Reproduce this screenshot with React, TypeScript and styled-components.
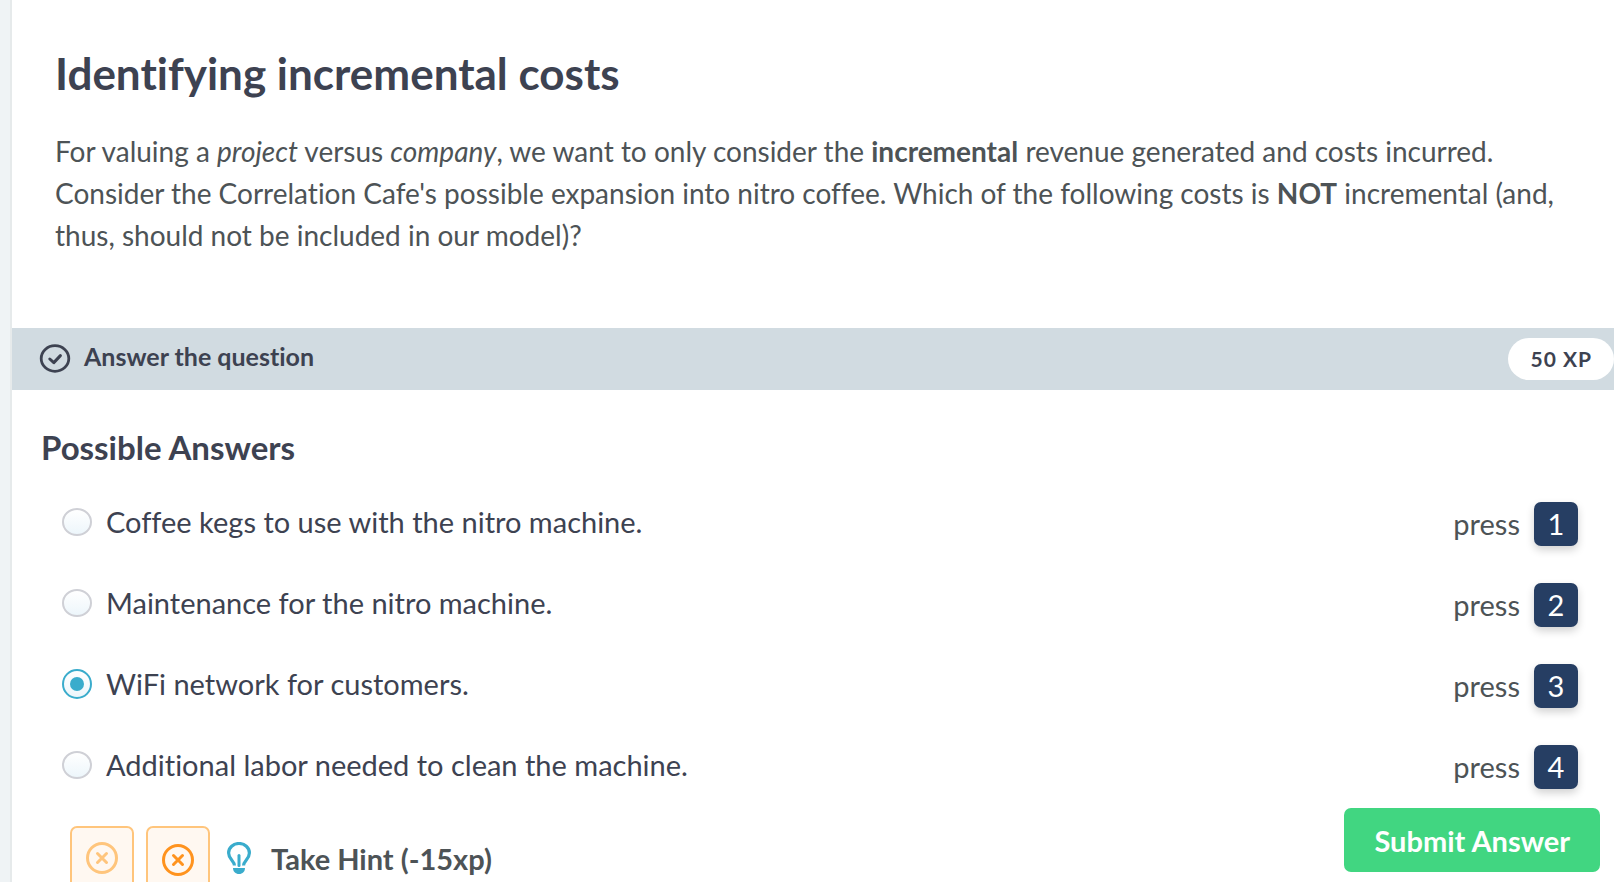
import React, { useState } from 'react';
import styled, { createGlobalStyle, css } from 'styled-components';

const Global = createGlobalStyle`
  * { box-sizing: border-box; }
  html, body, #root { height: 100%; }
  body {
    margin: 0;
    overflow: hidden;
    background: #eff3f5;
    color: #3d4251;
    font-family: Lato, sans-serif;
    font-variant-ligatures: none;
  }
  button { font-family: inherit; cursor: pointer; }
`;

const Panel = styled.main`
  margin-left: 10px;
  min-height: 100%;
  border-left: 2px solid #e6eaeb;
  background: #fff;
`;

const Intro = styled.section`
  padding: 46px 20px 72px 43px;
`;

const Title = styled.h1`
  margin: 0 0 30px;
  font-size: 44px;
  line-height: 54px;
  font-weight: 700;
`;

const Question = styled.p`
  margin: 0;
  font-size: 28px;
  line-height: 42px;
  color: #4d5356;
`;

const Bar = styled.header`
  display: flex;
  align-items: center;
  height: 62px;
  padding-left: 27px;
  background: #d1dbe1;
`;

const BarTitle = styled.h2`
  flex: 1;
  margin: 0 0 6px 13px;
  font-size: 25px;
  line-height: 30px;
`;

const Points = styled.span`
  padding: 0 22px;
  border-radius: 21px;
  background: #fff;
  font-size: 21px;
  line-height: 42px;
  font-weight: 700;
  letter-spacing: 1px;
`;

const Answers = styled.form`
  padding: 37px 36px 3px 29px;
`;

const Legend = styled.h2`
  margin: 0 0 14px;
  font-size: 33px;
  line-height: 40px;
`;

const Row = styled.div`
  display: flex;
  align-items: center;
  height: 81px;
`;

const Choice = styled.label`
  display: flex;
  align-items: center;
  flex: 1;
  gap: 14px;
  padding-left: 21px;
  font-size: 29px;
  line-height: 42px;
`;

const Radio = styled.input`
  appearance: none;
  display: grid;
  place-items: center;
  width: 30px;
  height: 28px;
  margin: 0;
  border: 2px solid #cfd0d6;
  border-radius: 50%;
  background: linear-gradient(#fff, #edf6fb);

  &:checked {
    height: 30px;
    border-color: #3aaccc;
  }

  &:checked::before {
    content: '';
    width: 14px;
    height: 14px;
    border-radius: 50%;
    background: #3aaccc;
  }
`;

const Shortcut = styled.span`
  display: flex;
  align-items: center;
  gap: 14px;
  padding-top: 4px;
  color: #4d5356;
  font-size: 29px;
  line-height: 44px;
`;

const Key = styled.kbd`
  width: 44px;
  border-radius: 7px;
  background: #263e63;
  box-shadow: 0 4px 8px rgba(0, 0, 0, 0.18);
  color: #fff;
  font-family: inherit;
  text-align: center;
`;

const Actions = styled.footer`
  display: flex;
  align-items: flex-start;
  justify-content: space-between;
  padding: 0 14px 0 58px;
`;

const Hints = styled.div`
  display: flex;
  align-items: flex-start;
  gap: 12px;
  padding-top: 18px;
`;

const Attempt = styled.span<{ $faded?: boolean }>`
  display: flex;
  justify-content: center;
  width: 64px;
  height: 68px;
  padding-top: 16px;
  border: 2px solid #ffc57c;
  border-radius: 7px;
  background: #fff8f1;
  color: #ff931e;
  ${(p) => p.$faded && css`
    padding-top: 14px;
    color: #ffc57c;
  `}
`;

const HintButton = styled.button`
  display: flex;
  align-items: center;
  gap: 20px;
  height: 64px;
  padding: 0 5px;
  border: 0;
  background: none;
  color: #4d5356;
  font-size: 29px;
  font-weight: 700;
`;

const Submit = styled.button`
  height: 64px;
  padding: 0 30px;
  border: 0;
  border-radius: 7px;
  background: #41d681;
  color: #fff;
  font-size: 29px;
  font-weight: 700;
`;

const answers = [
  'Coffee kegs to use with the nitro machine.',
  'Maintenance for the nitro machine.',
  'WiFi network for customers.',
  'Additional labor needed to clean the machine.',
];

const CheckIcon = () => (
  <svg width="32" height="30" viewBox="0 0 32 30" fill="none" stroke="currentColor" strokeWidth="3" aria-hidden="true">
    <ellipse cx="16" cy="14.5" rx="13.8" ry="12.8" strokeWidth="2.8" />
    <path d="M10.8 15l4 3.6 6.6-7" strokeLinecap="round" strokeLinejoin="round" />
  </svg>
);

const CrossIcon = () => (
  <svg width="32" height="32" viewBox="0 0 32 32" fill="none" stroke="currentColor" strokeWidth="3" aria-hidden="true">
    <circle cx="16" cy="16" r="14.5" />
    <path d="M11.5 11.5l9 9M20.5 11.5l-9 9" strokeLinecap="round" />
  </svg>
);

const BulbIcon = () => (
  <svg width="24" height="32" viewBox="0 0 24 32" fill="none" stroke="#3aaccc" aria-hidden="true">
    <path d="M7.4 23.6C7.4 18.6 1.6 17 1.6 11A10.4 9.5 0 0 1 22.4 11C22.4 17 16.6 18.6 16.6 23.6" strokeWidth="3.2" />
    <path d="M12 13.5V23.6" strokeWidth="3" strokeLinecap="round" />
    <path d="M6 26H18C18 29.6 15.6 32 12 32S6 29.6 6 26Z" fill="#3aaccc" stroke="none" />
  </svg>
);

export default function App() {
  const [selected, setSelected] = useState(2);

  return (
    <>
      <Global />
      <Panel>
        <Intro>
          <Title>Identifying incremental costs</Title>
          <Question>
            For valuing a <em>project</em> versus <em>company</em>, we want to only consider the{' '}
            <strong>incremental</strong> revenue generated and costs incurred. Consider the Correlation
            Cafe's possible expansion into nitro coffee. Which of the following costs is{' '}
            <strong>NOT</strong> incremental (and, thus, should not be included in our model)?
          </Question>
        </Intro>
        <Bar>
          <CheckIcon />
          <BarTitle>Answer the question</BarTitle>
          <Points>50 XP</Points>
        </Bar>
        <Answers id="answers" onSubmit={(e) => e.preventDefault()}>
          <Legend>Possible Answers</Legend>
          {answers.map((text, i) => (
            <Row key={text}>
              <Choice>
                <Radio type="radio" name="answer" checked={selected === i} onChange={() => setSelected(i)} />
                {text}
              </Choice>
              <Shortcut>
                press <Key>{i + 1}</Key>
              </Shortcut>
            </Row>
          ))}
        </Answers>
        <Actions>
          <Hints>
            <Attempt $faded><CrossIcon /></Attempt>
            <Attempt><CrossIcon /></Attempt>
            <HintButton type="button">
              <BulbIcon />
              Take Hint (-15xp)
            </HintButton>
          </Hints>
          <Submit type="submit" form="answers">Submit Answer</Submit>
        </Actions>
      </Panel>
    </>
  );
}
